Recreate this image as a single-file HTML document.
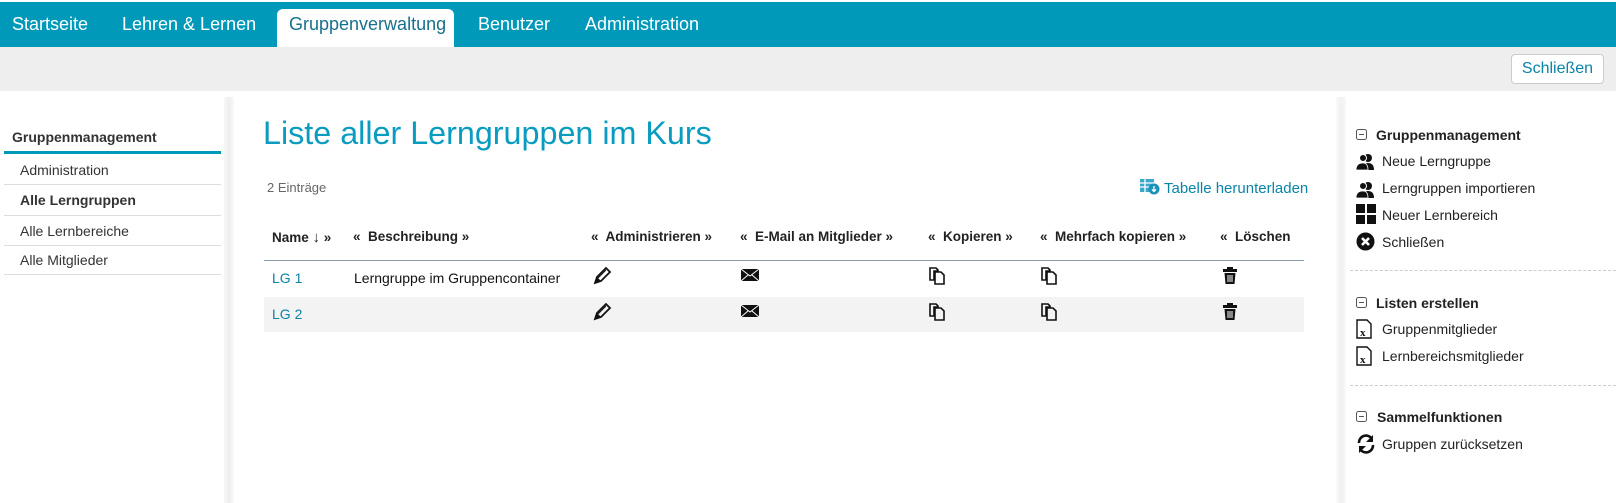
<!DOCTYPE html>
<html><head><meta charset="utf-8"><style>
*{box-sizing:border-box;margin:0;padding:0}
body{width:1616px;height:503px;overflow:hidden;background:#fff;font-family:"Liberation Sans",Arial,sans-serif;color:#222;position:relative}
.top{position:absolute;top:2px;left:0;width:1616px;height:45px;background:#0099ba}
.top a{position:absolute;top:12px;color:#fff;font-size:18px}
.tab{position:absolute;left:277px;top:7px;width:177px;height:40px;background:#fff;border-radius:6px 6px 0 0}
.gray{position:absolute;top:47px;left:0;width:1616px;height:44px;background:#eee}
.btn{position:absolute;right:12px;top:7px;width:93px;height:30px;border:1px solid #ccc;border-radius:4px;background:#fff;color:#0a84a8;font-size:16px;text-align:center;line-height:28px}
.ab{position:absolute}
.sep1{left:224px;top:97px;width:10px;height:406px;background:linear-gradient(90deg,#f8f8f8,#eeeeee,#f9f9f9)}
.sep2{left:1336px;top:97px;width:10px;height:406px;background:linear-gradient(90deg,#fafafa,#f0f0f0,#f9f9f9)}
.ln{position:absolute;left:4px;width:217px;border-top:1px solid #ddd;font-size:14px;color:#333;padding-left:16px}
.rp{position:absolute;left:1355px;font-size:14px;color:#222}
.rp b{font-size:14px}
.dash{position:absolute;left:1350px;width:266px;border-top:1px dashed #ccc}
.ic{position:absolute}
</style></head><body>
<div class="top">
<a style="left:12px">Startseite</a>
<a style="left:122px">Lehren &amp; Lernen</a>
<div class="tab"></div>
<a style="left:289px;color:#17708c">Gruppenverwaltung</a>
<a style="left:478px">Benutzer</a>
<a style="left:585px">Administration</a>
</div>
<div class="gray"><div class="btn">Schließen</div></div>
<div class="ab sep1"></div><div class="ab sep2"></div>

<div class="ab" style="left:12px;top:129px;font-size:14px;font-weight:bold;color:#333">Gruppenmanagement</div>
<div class="ab" style="left:4px;top:151px;width:217px;height:3px;background:#0099ba"></div>
<div class="ln" style="top:154px;border:none;height:30px;line-height:32px">Administration</div>
<div class="ln" style="top:184px;height:31px;line-height:30px;font-weight:bold">Alle Lerngruppen</div>
<div class="ln" style="top:215px;height:30px;line-height:30px">Alle Lernbereiche</div>
<div class="ln" style="top:245px;height:30px;line-height:29px;border-bottom:1px solid #ddd">Alle Mitglieder</div>

<div class="ab" style="left:263px;top:115px;font-size:32.3px;color:#0a9cc0">Liste aller Lerngruppen im Kurs</div>
<div class="ab" style="left:267px;top:180px;font-size:13px;color:#666">2 Einträge</div>
<svg class="ic" style="left:1140px;top:178px" width="20" height="17" viewBox="0 0 20 17"><rect x="0" y="1" width="14" height="13" fill="#3aa8c8"/><path d="M0 5H14M0 9H14M5 1V14" stroke="#fff" stroke-width="1.3"/><circle cx="14" cy="11" r="5.5" fill="#1a93b8"/><path d="M14 8V13M12 11.5L14 13.5L16 11.5" stroke="#fff" stroke-width="1.3" fill="none"/></svg>
<div class="ab" style="left:1164px;top:180px;font-size:15px;color:#0a84a8">Tabelle herunterladen</div>

<div class="ab" style="left:264px;top:226px;width:1040px;height:35px;border-bottom:1px solid #8899aa"></div>
<div class="ab" style="left:264px;top:297px;width:1040px;height:35px;background:#f3f3f3"></div>
<div class="ab" style="left:272px;top:229px;font-size:13.5px;font-weight:bold;color:#222;white-space:pre">Name <span style="font-weight:normal;font-size:15px">↓</span> »</div>
<div class="ab" style="left:353px;top:229px;font-size:13.5px;font-weight:bold;white-space:pre">«  Beschreibung »</div>
<div class="ab" style="left:591px;top:229px;font-size:13.5px;font-weight:bold;white-space:pre">«  Administrieren »</div>
<div class="ab" style="left:740px;top:229px;font-size:13.5px;font-weight:bold;white-space:pre">«  E-Mail an Mitglieder »</div>
<div class="ab" style="left:928px;top:229px;font-size:13.5px;font-weight:bold;white-space:pre">«  Kopieren »</div>
<div class="ab" style="left:1040px;top:229px;font-size:13.5px;font-weight:bold;white-space:pre">«  Mehrfach kopieren »</div>
<div class="ab" style="left:1220px;top:229px;font-size:13.5px;font-weight:bold;white-space:pre">«  Löschen</div>

<div class="ab" style="left:272px;top:270px;font-size:14px;color:#0a84a8">LG 1</div>
<div class="ab" style="left:354px;top:270px;font-size:14px;color:#111">Lerngruppe im Gruppencontainer</div>
<div class="ab" style="left:272px;top:306px;font-size:14px;color:#0a84a8">LG 2</div>

<svg width="0" height="0" style="position:absolute"><defs>
<g id="pen"><path d="M3 17L5 11L14 2L18 6L9 15Z" fill="none" stroke="#111" stroke-width="1.8"/><path d="M3 17L5 11L9 15Z" fill="#111"/><path d="M6 12L14 4" stroke="#111"/></g>
<g id="mail"><rect x="0" y="3" width="18" height="12" fill="#111"/><path d="M0 3L9 10L18 3M0 15L7 9M18 15L11 9" stroke="#fff" stroke-width="1" fill="none"/></g>
<g id="cp"><path d="M2 2H8L10 4V5H6V14H2Z" fill="none" stroke="#111" stroke-width="1.6"/><path d="M7 6H13L16 9V18H7Z" fill="none" stroke="#111" stroke-width="1.6"/></g>
<g id="tr"><rect x="6" y="1" width="6" height="2" fill="#111"/><rect x="2" y="3" width="14" height="3" fill="#111"/><path d="M3.5 7H14.5L13.5 18H4.5Z" fill="#111"/><path d="M7 9V16M9 9V16M11 9V16" stroke="#fff" stroke-width="1"/></g>
</defs></svg>
<svg class="ic" style="left:592px;top:266px" width="20" height="20"><use href="#pen"/></svg>
<svg class="ic" style="left:592px;top:302px" width="20" height="20"><use href="#pen"/></svg>
<svg class="ic" style="left:741px;top:266px" width="20" height="20"><use href="#mail"/></svg>
<svg class="ic" style="left:741px;top:302px" width="20" height="20"><use href="#mail"/></svg>
<svg class="ic" style="left:928px;top:266px" width="20" height="20"><use href="#cp"/></svg>
<svg class="ic" style="left:928px;top:302px" width="20" height="20"><use href="#cp"/></svg>
<svg class="ic" style="left:1040px;top:266px" width="20" height="20"><use href="#cp"/></svg>
<svg class="ic" style="left:1040px;top:302px" width="20" height="20"><use href="#cp"/></svg>
<svg class="ic" style="left:1221px;top:266px" width="20" height="20"><use href="#tr"/></svg>
<svg class="ic" style="left:1221px;top:302px" width="20" height="20"><use href="#tr"/></svg>

<svg width="0" height="0" style="position:absolute"><defs>
<g id="mn"><rect x="0.5" y="0.5" width="10" height="10" rx="2" fill="none" stroke="#555"/><path d="M3 5.5H8" stroke="#555"/></g>
<g id="usr"><circle cx="12" cy="6" r="4" fill="#111"/><path d="M6 18Q6 11 12 11Q18 11 18 18Z" fill="#111"/><circle cx="7" cy="6" r="3.5" fill="#111" stroke="#fff"/><path d="M0 18Q0 11 7 11Q12 11 12 18Z" fill="#111" stroke="#fff" stroke-width=".8"/></g>
<g id="xl"><path d="M1 1H11L15 5V19H1Z" fill="#fff" stroke="#111" stroke-width="1.4"/><text x="4" y="17" font-family="Liberation Serif" font-weight="bold" font-size="11" fill="#111">x</text></g>
</defs></svg>
<svg class="ic" style="left:1356px;top:129px" width="12" height="12"><use href="#mn"/></svg>
<div class="rp" style="left:1376px;top:127px"><b>Gruppenmanagement</b></div>
<svg class="ic" style="left:1356px;top:152px" width="20" height="20"><use href="#usr"/></svg>
<div class="rp" style="left:1382px;top:153px">Neue Lerngruppe</div>
<svg class="ic" style="left:1356px;top:180px" width="20" height="20"><use href="#usr"/></svg>
<div class="rp" style="left:1382px;top:180px">Lerngruppen importieren</div>
<svg class="ic" style="left:1356px;top:204px" width="20" height="20"><rect x="0" y="0" width="9" height="9" fill="#111"/><rect x="11" y="0" width="9" height="9" fill="#111"/><rect x="0" y="11" width="9" height="9" fill="#111"/><rect x="11" y="11" width="9" height="9" fill="#111"/></svg>
<div class="rp" style="left:1382px;top:207px">Neuer Lernbereich</div>
<svg class="ic" style="left:1356px;top:232px" width="20" height="20"><circle cx="9.5" cy="9.5" r="9" fill="#111"/><path d="M6 6L13 13M13 6L6 13" stroke="#fff" stroke-width="2.6"/></svg>
<div class="rp" style="left:1382px;top:234px">Schließen</div>
<div class="dash" style="top:270px"></div>
<svg class="ic" style="left:1356px;top:297px" width="12" height="12"><use href="#mn"/></svg>
<div class="rp" style="left:1376px;top:295px"><b>Listen erstellen</b></div>
<svg class="ic" style="left:1356px;top:319px" width="20" height="20"><use href="#xl"/></svg>
<div class="rp" style="left:1382px;top:321px">Gruppenmitglieder</div>
<svg class="ic" style="left:1356px;top:346px" width="20" height="20"><use href="#xl"/></svg>
<div class="rp" style="left:1382px;top:348px">Lernbereichsmitglieder</div>
<div class="dash" style="top:385px"></div>
<svg class="ic" style="left:1356px;top:411px" width="12" height="12"><use href="#mn"/></svg>
<div class="rp" style="left:1377px;top:409px"><b>Sammelfunktionen</b></div>
<svg class="ic" style="left:1356px;top:434px" width="20" height="20"><path d="M3 9A7 7 0 0 1 16 5" fill="none" stroke="#111" stroke-width="2.6"/><path d="M17 1V8H10Z" fill="#111"/><path d="M17 11A7 7 0 0 1 4 15" fill="none" stroke="#111" stroke-width="2.6"/><path d="M3 19V12H10Z" fill="#111"/></svg>
<div class="rp" style="left:1382px;top:436px">Gruppen zurücksetzen</div>
</body></html>
